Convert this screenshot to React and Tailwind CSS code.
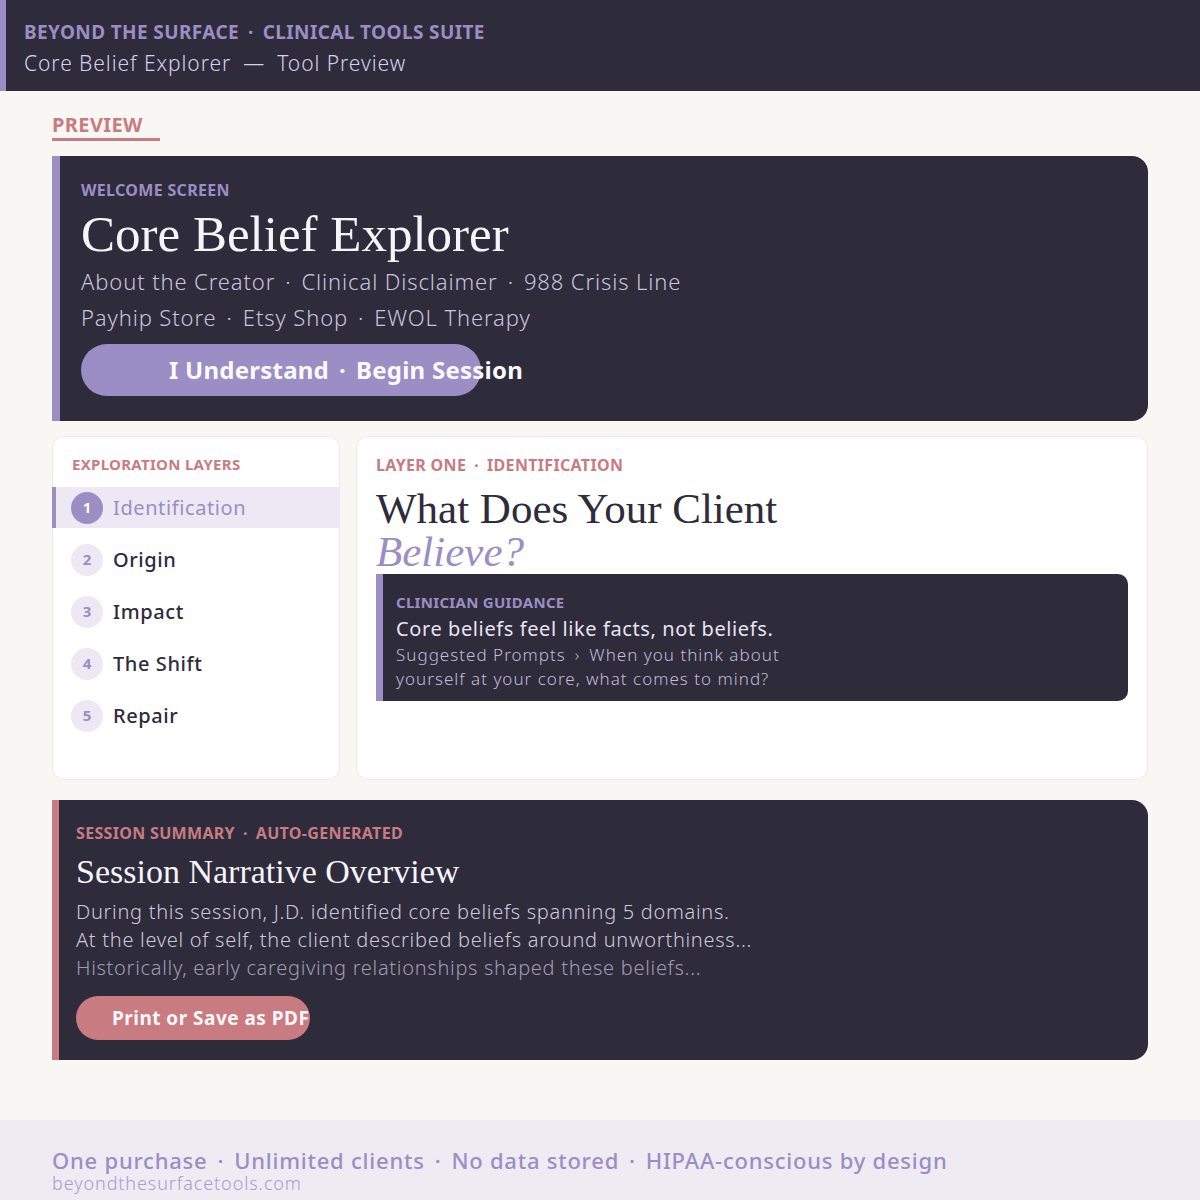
import React from "react";

const serif = "font-['Liberation_Serif','Times_New_Roman',serif]";

function Dot({ cls = "mx-[9px]" }) {
  return <span className={`${cls} inline-block`}>·</span>;
}

export default function App() {
  const layers = ["Identification", "Origin", "Impact", "The Shift", "Repair"];
  return (
    <div className="min-h-[1200px] bg-[#f8f7f3] flex flex-col font-['Noto_Sans','Open_Sans',sans-serif]">
      {/* Header */}
      <header className="h-[91px] bg-[#2e2b3b] border-l-[6px] border-[#9b8ec4] pl-[18px] pt-[18px]">
        <div className="text-[19px] leading-[28px] font-bold text-[#9b8ec4] tracking-[0.02em]">
          BEYOND THE SURFACE<Dot />CLINICAL TOOLS SUITE
        </div>
        <div className="text-[21px] leading-[30px] font-light text-[#d6d0ea] tracking-[0.045em] mt-[2px]">
          Core Belief Explorer<span className="mx-[12px]">—</span>Tool Preview
        </div>
      </header>

      <main className="flex-1 px-[52px] pt-[21px] pb-[55px] flex flex-col">
        <div>
          <div className="inline-block text-[20px] leading-[26px] font-bold text-[#c97b82] pr-[17px] border-b-[3px] border-[#c97b82] tracking-[0.02em]">
            PREVIEW
          </div>
        </div>

        {/* Welcome card */}
        <section className="mt-[15px] bg-[#2e2b3b] border-l-[8px] border-[#9b8ec4] rounded-r-[16px] pl-[21px] pt-[24px] pb-[25px]">
          <div className="text-[16px] leading-[20px] font-bold text-[#9b8ec4] tracking-[0.02em]">WELCOME SCREEN</div>
          <h1 className={`${serif} mt-[5px] text-[51px] leading-[58px] text-[#f6f4fb]`}>Core Belief Explorer</h1>
          <div className="text-[22px] leading-[36px] font-light text-[#c9c3de] tracking-[0.04em]">
            <div>
              About the Creator<Dot cls="mx-[10px]" />Clinical Disclaimer<Dot cls="mx-[10px]" />988 Crisis Line
            </div>
            <div>
              Payhip Store<Dot cls="mx-[10px]" />Etsy Shop<Dot cls="mx-[10px]" />EWOL Therapy
            </div>
          </div>
          <button className="mt-[9px] w-[400px] h-[52px] rounded-full bg-[#9b8ec4] pl-[88px] text-left whitespace-nowrap text-[24px] font-bold text-[#fbfaff] tracking-[0.01em] block">
            I Understand<Dot cls="mx-[10px]" />Begin Session
          </button>
        </section>

        {/* Columns */}
        <div className="mt-[15px] flex gap-[16px] h-[344px]">
          <aside className="w-[288px] shrink-0 bg-white border border-[#ece9f5] rounded-[12px] pt-[17px]">
            <div className="pl-[19px] text-[15px] leading-[20px] font-bold text-[#c97b82] tracking-[0.02em]">EXPLORATION LAYERS</div>
            <div className="mt-[13px] flex flex-col gap-[11px]">
              {layers.map((l, i) => {
                const active = i === 0;
                return (
                  <div
                    key={l}
                    className={`h-[41px] flex items-center gap-[10px] border-l-[4px] pl-[15px] -ml-px ${
                      active ? "bg-[#ece9f5] border-[#9b8ec4]" : "border-transparent"
                    }`}
                  >
                    <div
                      className={`w-[32px] h-[32px] rounded-full flex items-center justify-center text-[15px] font-bold ${
                        active ? "bg-[#9b8ec4] text-white" : "bg-[#ece9f5] text-[#9b8ec4]"
                      }`}
                    >
                      {i + 1}
                    </div>
                    <div
                      className={`text-[20px] tracking-[0.03em] ${
                        active ? "text-[#9b8ec4] font-normal" : "text-[#2e2b3b] font-medium"
                      }`}
                    >
                      {l}
                    </div>
                  </div>
                );
              })}
            </div>
          </aside>

          <section className="flex-1 bg-white border border-[#ece9f5] rounded-[12px] pt-[18px] px-[19px]">
            <div className="text-[16px] leading-[20px] font-bold text-[#c97b82] tracking-[0.02em]">
              LAYER ONE<Dot cls="mx-[8px]" />IDENTIFICATION
            </div>
            <h2 className={`${serif} mt-[12px] text-[43px] leading-[43px] text-[#2e2b3b]`}>
              What Does Your Client
              <br />
              <em className="text-[#9b8ec4]">Believe?</em>
            </h2>
            <div className="mt-[1px] bg-[#2e2b3b] border-l-[7px] border-[#9b8ec4] rounded-r-[10px] pl-[13px] pt-[18px] pb-[10px]">
              <div className="text-[15px] leading-[20px] font-bold text-[#9b8ec4] tracking-[0.02em]">CLINICIAN GUIDANCE</div>
              <div className="text-[20px] leading-[28px] text-[#e8e4f2] tracking-[0.03em] mt-[3px]">
                Core beliefs feel like facts, not beliefs.
              </div>
              <div className="text-[17px] leading-[24px] font-light text-[#c2bcd8] tracking-[0.06em] max-w-[420px]">
                Suggested Prompts<span className="mx-[9px]">›</span>When you think about yourself at your core, what comes to mind?
              </div>
            </div>
          </section>
        </div>

        {/* Summary */}
        <section className="mt-[20px] bg-[#2e2b3b] border-l-[7px] border-[#c97b82] rounded-r-[16px] pl-[17px] pt-[23px] pb-[20px]">
          <div className="text-[16px] leading-[20px] font-bold text-[#c97b82] tracking-[0.02em]">
            SESSION SUMMARY<Dot cls="mx-[8px]" />AUTO-GENERATED
          </div>
          <h3 className={`${serif} mt-[9px] text-[34px] leading-[40px] text-[#f6f4fb]`}>Session Narrative Overview</h3>
          <div className="mt-[6px] text-[20px] leading-[28px] font-light tracking-[0.035em]">
            <div className="text-[#cdc8dc]">During this session, J.D. identified core beliefs spanning 5 domains.</div>
            <div className="text-[#cdc8dc]">At the level of self, the client described beliefs around unworthiness...</div>
            <div className="text-[#a09bb3]">Historically, early caregiving relationships shaped these beliefs...</div>
          </div>
          <button className="mt-[14px] w-[234px] h-[44px] rounded-full bg-[#c97b82] pl-[36px] text-left whitespace-nowrap overflow-hidden text-[19px] font-bold text-[#fbf7f7] tracking-[0.025em] block">
            Print or Save as PDF
          </button>
        </section>
      </main>

      <footer className="h-[80px] bg-[#eeebf3] px-[52px] pt-[26px]">
        <div className="text-[22px] leading-[28px] font-medium text-[#9b8ec4] tracking-[0.035em]">
          One purchase<Dot cls="mx-[10px]" />Unlimited clients<Dot cls="mx-[10px]" />No data stored<Dot cls="mx-[10px]" />HIPAA-conscious by design
        </div>
        <div className="text-[18px] leading-[18px] font-light text-[#a79dcf] tracking-[0.05em]">beyondthesurfacetools.com</div>
      </footer>
    </div>
  );
}
